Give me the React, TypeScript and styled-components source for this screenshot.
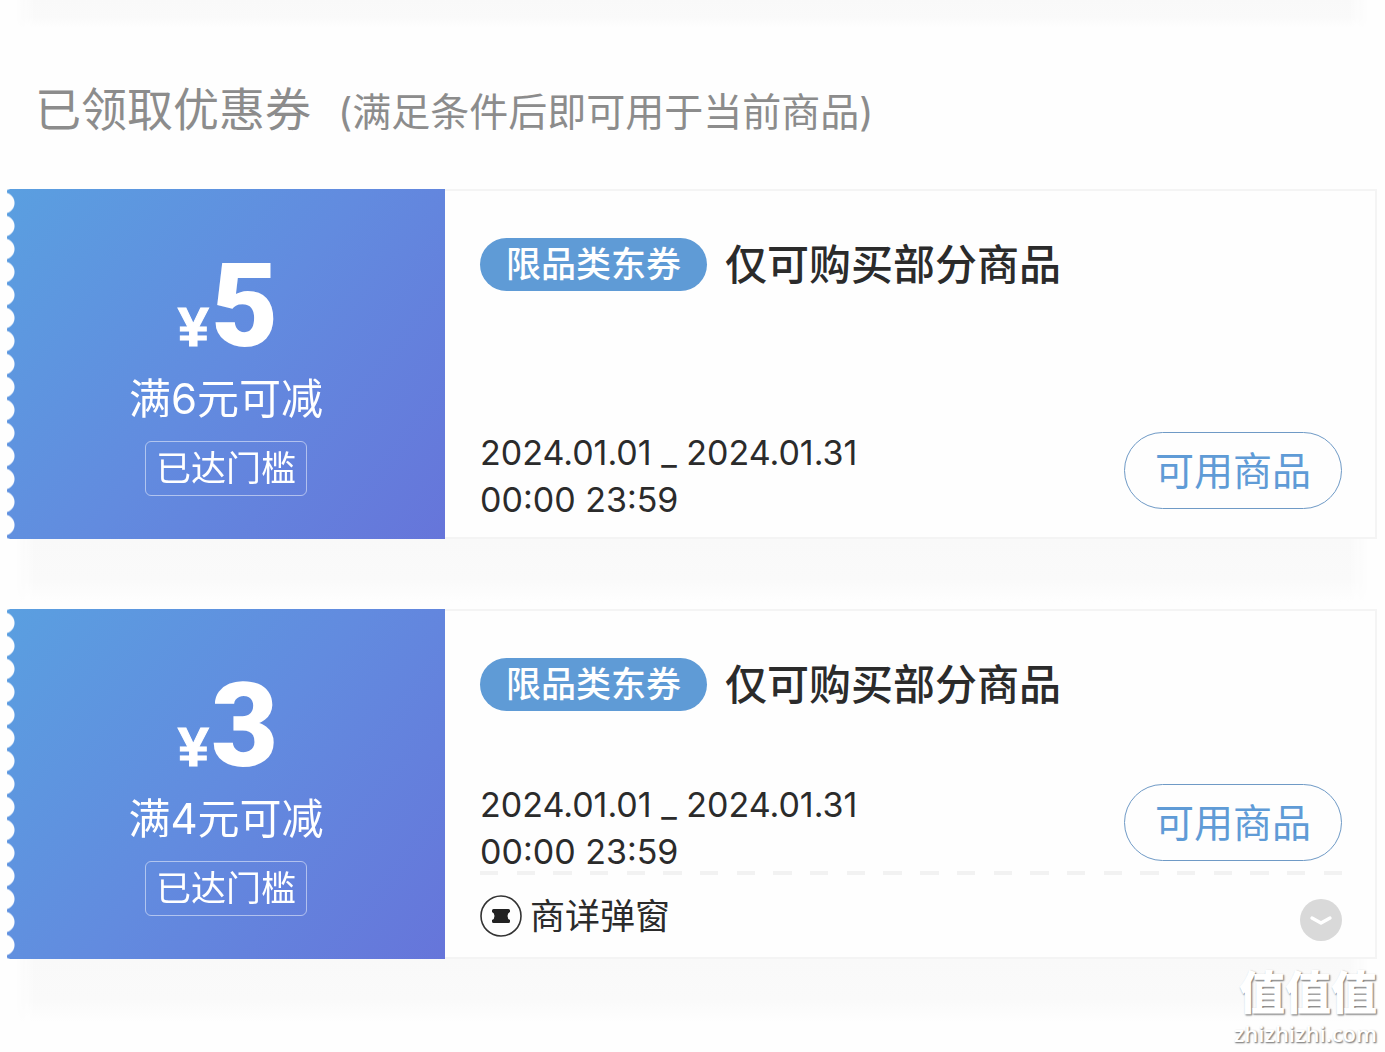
import React from "react";
import styled, { createGlobalStyle } from "styled-components";

const GlobalStyle = createGlobalStyle`
  *, *::before, *::after { box-sizing: border-box; }
  body {
    margin: 0;
    background: #fefefe;
    color: #2b2b2b;
    font-family: Inter, "Noto Sans CJK SC", sans-serif;
  }
  h1, h2, p { margin: 0; font-weight: 400; }
  button { font: inherit; cursor: pointer; }
`;

const Page = styled.main`
  position: relative;
  padding: 0 8px 23px 7px;
`;

const Shade = styled.div<{ $height: number }>`
  height: ${(p) => p.$height}px;
  margin: 0 8px;
  background: linear-gradient(#f9f9f9, #fafafa 60%, #fefefe 90%);
  mask-image: linear-gradient(90deg, transparent, #000 20px, #000 calc(100% - 20px), transparent);
`;

const Heading = styled.header`
  display: flex;
  align-items: baseline;
  gap: 27px;
  padding: 43px 28px 41px;
  color: #8c8c8c;
`;

const HeadingTitle = styled.h1`
  font-size: 46px;
  line-height: 72px;
`;

const HeadingNote = styled.p`
  font-size: 39px;
  line-height: 72px;
`;

const Card = styled.article`
  display: grid;
  grid-template-columns: 438px 1fr;
  min-height: 350px;
`;

const Value = styled.div`
  display: flex;
  flex-direction: column;
  align-items: center;
  justify-content: flex-end;
  padding-bottom: 43px;
  color: #fff;
  background: linear-gradient(128deg, #5a9fe0, #628bdf 50%, #6675da);
  mask-image: radial-gradient(circle at -3px 50%, transparent 10px, #000 11px),
    linear-gradient(#000, #000);
  mask-size: 10px 23px, calc(100% - 10px) 100%;
  mask-position: left center, right top;
  mask-repeat: repeat-y, no-repeat;
`;

const Amount = styled.p`
  display: flex;
  align-items: baseline;
  gap: 2px;
  padding-left: 4px;
  font-family: Roboto, "Liberation Sans", sans-serif;
  font-weight: 900;
  font-size: 116px;
  line-height: 84px;
`;

const Currency = styled.span`
  font-family: "Liberation Sans", sans-serif;
  font-size: 56px;
  font-weight: 700;
  -webkit-text-stroke: 1px currentColor;
`;

const Condition = styled.p`
  margin: 5px 0 17px;
  font-size: 42px;
  line-height: 50px;
`;

const Reached = styled.span`
  padding: 0 10px;
  border: 1px solid rgba(255, 255, 255, 0.5);
  border-radius: 6px;
  font-size: 35px;
  line-height: 53px;
`;

const Details = styled.div`
  display: flex;
  flex-direction: column;
  padding: 47px 33px 0 35px;
  border: 2px solid #f4f4f4;
  border-left: 0;
`;

const TitleRow = styled.div`
  display: flex;
  align-items: center;
  gap: 18px;
`;

const Badge = styled.span`
  padding: 0 26px;
  border-radius: 27px;
  background: #5f9bd6;
  color: #fff;
  font-size: 35px;
  font-weight: 500;
  line-height: 53px;
`;

const Title = styled.h2`
  font-size: 42px;
  font-weight: 500;
  line-height: 50px;
`;

const PeriodRow = styled.div<{ $last: boolean }>`
  display: flex;
  align-items: flex-start;
  justify-content: space-between;
  margin-top: auto;
  padding-bottom: ${(p) => (p.$last ? 14 : 0)}px;
`;

const Period = styled.p`
  font-size: 34px;
  line-height: 47px;
`;

const UseButton = styled.button`
  height: 77px;
  margin-top: 3px;
  padding: 0 30px;
  border: 1px solid #6f9ac6;
  border-radius: 39px;
  background: transparent;
  color: #5f9bd6;
  font-size: 39px;
  line-height: 75px;
`;

const Divider = styled.div`
  height: 4px;
  margin-top: -4px;
  background: repeating-linear-gradient(
    90deg,
    #f2f2f2 0 calc(100% / 47),
    transparent 0 calc(200% / 47)
  );
`;

const Footer = styled.div`
  display: flex;
  align-items: center;
  gap: 8px;
  height: 82px;
  font-size: 35px;
  line-height: 50px;
`;

const ExpandButton = styled.button`
  display: grid;
  place-items: center;
  width: 42px;
  height: 42px;
  margin: 8px 0 0 auto;
  padding: 0;
  border: 0;
  border-radius: 50%;
  background: #d9d9d9;
`;

const Watermark = styled.div`
  position: absolute;
  right: 8px;
  bottom: 5px;
  display: flex;
  flex-direction: column;
  align-items: flex-end;
  color: #fff;
  text-shadow: 1px 1px 2px #808080, 1px 1px 1px #b0b0b0;
`;

const WatermarkName = styled.span`
  font-size: 46px;
  font-weight: 900;
  line-height: 54px;
`;

const WatermarkSite = styled.span`
  font-family: "Open Sans", sans-serif;
  font-size: 22px;
  font-weight: 600;
  line-height: 28px;
`;

function CouponIcon() {
  return (
    <svg width="42" height="42" viewBox="0 0 42 42" aria-hidden="true">
      <circle cx="21" cy="21" r="20" fill="none" stroke="#333" strokeWidth="1.6" />
      <path
        d="M13.5 14H28.5Q30 14 30 15.5V17Q27.500 18 27.500 21T30 25V26.500Q30 28 28.500 28H13.500Q12 28 12 26.500V25Q14.500 24 14.500 21T12 17V15.500Q12 14 13.500 14Z"
        fill="#222"
      />
    </svg>
  );
}

type CouponData = {
  amount: number;
  threshold: number;
  popup?: string;
};

const coupons: CouponData[] = [
  { amount: 5, threshold: 6 },
  { amount: 3, threshold: 4, popup: "商详弹窗" },
];

function Coupon({ amount, threshold, popup }: CouponData) {
  return (
    <Card>
      <Value>
        <Amount>
          <Currency>¥</Currency>
          {amount}
        </Amount>
        <Condition>满{threshold}元可减</Condition>
        <Reached>已达门槛</Reached>
      </Value>
      <Details>
        <TitleRow>
          <Badge>限品类东券</Badge>
          <Title>仅可购买部分商品</Title>
        </TitleRow>
        <PeriodRow $last={!popup}>
          <Period>
            2024.01.01 _ 2024.01.31
            <br />
            00:00 23:59
          </Period>
          <UseButton type="button">可用商品</UseButton>
        </PeriodRow>
        {popup && (
          <>
            <Divider />
            <Footer>
              <CouponIcon />
              <span>{popup}</span>
              <ExpandButton type="button" aria-label="展开">
                <svg width="42" height="42" viewBox="0 0 42 42" aria-hidden="true">
                  <path
                    d="M12 19L21 24L30 19"
                    fill="none"
                    stroke="#fff"
                    strokeWidth="3.4"
                    strokeLinecap="round"
                    strokeLinejoin="round"
                  />
                </svg>
              </ExpandButton>
            </Footer>
          </>
        )}
      </Details>
    </Card>
  );
}

export default function App() {
  return (
    <>
      <GlobalStyle />
      <Page>
        <Shade $height={30} />
        <Heading>
          <HeadingTitle>已领取优惠券</HeadingTitle>
          <HeadingNote>(满足条件后即可用于当前商品)</HeadingNote>
        </Heading>
        {coupons.map((coupon) => (
          <React.Fragment key={coupon.amount}>
            <Coupon {...coupon} />
            <Shade $height={70} />
          </React.Fragment>
        ))}
        <Watermark>
          <WatermarkName>值值值</WatermarkName>
          <WatermarkSite>zhizhizhi.com</WatermarkSite>
        </Watermark>
      </Page>
    </>
  );
}
